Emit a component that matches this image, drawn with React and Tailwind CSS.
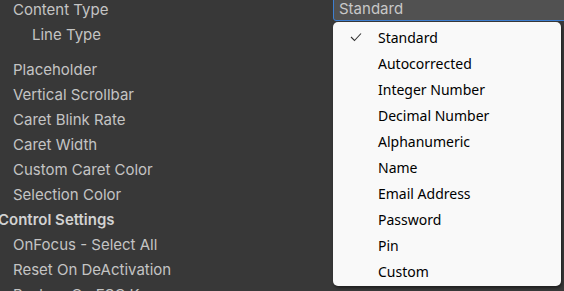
import React from 'react';

const labels = [
    { text: 'Content Type', cls: 'pl-[13px] text-[#7aa7ea]' },
    { text: 'Line Type', cls: 'pl-[32px] mb-[10px]' },
    { text: 'Placeholder', cls: 'pl-[13px]' },
    { text: 'Vertical Scrollbar', cls: 'pl-[13px]' },
    { text: 'Caret Blink Rate', cls: 'pl-[13px]' },
    { text: 'Caret Width', cls: 'pl-[13px]' },
    { text: 'Custom Caret Color', cls: 'pl-[13px]' },
    { text: 'Selection Color', cls: 'pl-[13px]' },
    { text: 'Control Settings', cls: '-ml-[2px] font-semibold text-[#d2d2d2]' },
    { text: 'OnFocus - Select All', cls: 'pl-[13px]' },
    { text: 'Reset On DeActivation', cls: 'pl-[13px]' },
    { text: 'Restore On ESC Key', cls: 'pl-[13px]' },
];

const options = [
    'Standard',
    'Autocorrected',
    'Integer Number',
    'Decimal Number',
    'Alphanumeric',
    'Name',
    'Email Address',
    'Password',
    'Pin',
    'Custom',
];

const App = () => {
    return (
        <div className="relative w-[564px] h-[291px] overflow-hidden bg-[#383838] font-['Inter',sans-serif]">
            <div className="flex flex-col -mt-[2px]">
                {labels.map((l) => (
                    <div key={l.text} className={`h-[25px] flex items-center text-[15px] text-[#c4c4c4] whitespace-nowrap ${l.cls}`}>
                        {l.text}
                    </div>
                ))}
            </div>

            {/* field */}
            <div className="absolute left-[333px] -top-[4px] w-[240px] h-[25px] bg-[#515151] border border-[#3d7fd1] rounded-[3px] flex items-center pl-[5px] pt-[1px] text-[15px] text-[#c8c8c8]">
                Standard
            </div>

            {/* dropdown */}
            <div className="absolute left-[333px] top-[22px] w-[228px] h-[264px] bg-[#f9f9f9] rounded-[5px] shadow-[1px_2px_3px_rgba(0,0,0,0.45)] pt-[2px] font-['Noto_Sans',sans-serif]">
                {options.map((o, i) => (
                    <div key={o} className="h-[26px] flex items-center text-[14px] text-[#000]">
                        <div className="w-[45px] flex justify-end pr-[16px]">
                            {i === 0 && (
                                <svg width="12" height="10" viewBox="0 0 12 10" fill="none">
                                    <path d="M1 5 L4.5 8.5 L11 1.5" stroke="#333" strokeWidth="1.1" />
                                </svg>
                            )}
                        </div>
                        <span>{o}</span>
                    </div>
                ))}
            </div>
        </div>
    );
};

export default App;
